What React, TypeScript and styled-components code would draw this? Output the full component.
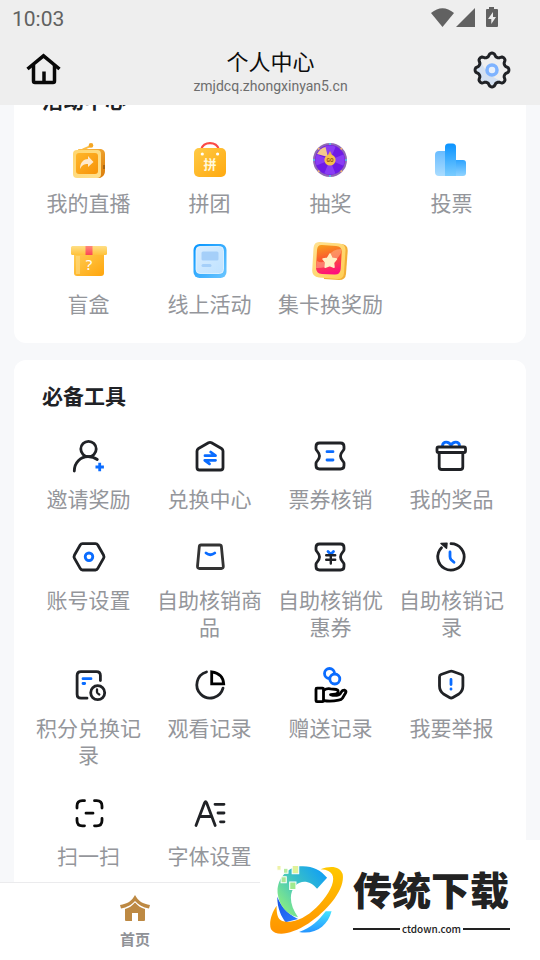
import React, { useLayoutEffect, useRef } from "react";
import styled, { createGlobalStyle } from "styled-components";

const GlobalStyle = createGlobalStyle`
  * { box-sizing: border-box; }
  body { margin: 0; background: #f7f8fa; font-family: "Noto Sans CJK SC", "Noto Sans", sans-serif; }
`;

const INK = "#202226";
const BLUE = "#0a6cff";

const Screen = styled.div`
  display: flex;
  flex-direction: column;
  height: 100vh;
  overflow: hidden;
  background: #f7f8fa;
`;

const Header = styled.header`
  flex: none;
  background: #eeeeee;
`;

const StatusBar = styled.div`
  display: flex;
  align-items: center;
  justify-content: space-between;
  height: 36px;
  padding: 0 42px 0 12px;
  color: #616161;
`;

const Clock = styled.time`
  font: 400 21px/24px Roboto, sans-serif;
  padding-top: 2px;
`;

const StatusIcons = styled.div`
  display: flex;
  align-items: center;
`;

const TitleBar = styled.div`
  display: flex;
  align-items: center;
  justify-content: space-between;
  height: 69px;
  padding: 0 28px 1px 24px;
`;

const IconButton = styled.button`
  display: block;
  padding: 0;
  border: 0;
  background: none;
  cursor: pointer;
  svg { display: block; }
`;

const Heading = styled.div`
  padding-left: 5px;
  text-align: center;
`;

const PageTitle = styled.h1`
  margin: 0 0 2px;
  font-size: 22px;
  font-weight: 400;
  line-height: 30px;
  color: #0c0c0c;
`;

const Address = styled.p`
  margin: 0;
  font: 400 14px/18px Roboto, sans-serif;
  color: #6d6d6d;
`;

const Content = styled.main`
  flex: 1;
  min-height: 0;
  overflow-y: auto;
  scrollbar-width: none;
  padding: 14px 14px 0;
`;

const Card = styled.section`
  margin-bottom: 17px;
  padding: 20px 14px 26px;
  border-radius: 12px;
  background: #ffffff;
`;

const CardTitle = styled.h2`
  margin: 0 0 26px 14px;
  font-size: 21px;
  font-weight: 700;
  line-height: 30px;
  color: #202226;
`;

const Grid = styled.div`
  display: grid;
  grid-template-columns: repeat(4, 1fr);
  row-gap: 25px;
`;

const Item = styled.a`
  display: flex;
  flex-direction: column;
  align-items: center;
  gap: 8px;
  color: #94969b;
  text-decoration: none;
  text-align: center;
  svg { display: block; flex: none; }
`;

const ItemLabel = styled.span`
  font-size: 21px;
  font-weight: 400;
  line-height: 27px;
`;

const TabBar = styled.nav`
  flex: none;
  display: grid;
  grid-template-columns: 1fr 1fr;
  height: 78px;
  border-top: 1px solid #ebebed;
  background: #ffffff;
`;

const Tab = styled.a`
  display: flex;
  flex-direction: column;
  align-items: center;
  gap: 7px;
  padding-top: 12px;
  font-size: 15px;
  font-weight: 700;
  line-height: 20px;
  color: #909297;
  text-decoration: none;
`;

const Watermark = styled.aside`
  position: fixed;
  right: 0;
  bottom: 0;
  display: flex;
  align-items: center;
  gap: 10px;
  width: 280px;
  height: 120px;
  padding-left: 10px;
  background: #ffffff;
`;

const Brand = styled.div`
  width: 157px;
`;

const BrandName = styled.div`
  margin-bottom: 11px;
  font-size: 39px;
  font-weight: 900;
  line-height: 46px;
  color: #222222;
`;

const BrandSite = styled.div`
  display: flex;
  align-items: center;
  gap: 2px;
  font: 500 10px/14px "Noto Sans CJK SC", sans-serif;
  color: #222222;
  &::before, &::after {
    content: "";
    flex: 1;
    height: 2px;
    background: #222222;
  }
`;

const Glyph = ({ children }: { children: React.ReactNode }) => (
  <svg width="41" height="41" viewBox="0 0 41 41" fill="none" stroke={INK} strokeWidth="2.8" strokeLinecap="round" strokeLinejoin="round" aria-hidden="true">
    {children}
  </svg>
);

const Art = ({ children }: { children: React.ReactNode }) => (
  <svg width="41" height="41" viewBox="0 0 41 41" fill="none" aria-hidden="true">
    {children}
  </svg>
);

const Grad = ({ id, from, to, flat }: { id: string; from: string; to: string; flat?: boolean }) => (
  <linearGradient id={id} x1="0" y1="0" x2={flat ? "0" : "1"} y2="1">
    <stop stopColor={from} />
    <stop offset="1" stopColor={to} />
  </linearGradient>
);

const LiveIcon = () => (
  <Art>
    <defs>
      <Grad id="tvSide" from="#ffc14a" to="#d97a08" />
      <Grad id="tvFront" from="#ffd66e" to="#ffe08e" />
      <Grad id="tvScreen" from="#ffb629" to="#f79308" />
    </defs>
    <path d="M15 9.3 22 6.4" stroke="#fbbd45" strokeWidth="2" strokeLinecap="round" />
    <circle cx="23" cy="5.4" r="2.3" fill="#f5a623" />
    <path d="M10 9h23q4 1 4 5v17q0 5-5 7H20z" fill="url(#tvSide)" />
    <rect x="5" y="10" width="28" height="28" rx="4" fill="url(#tvFront)" />
    <rect x="8" y="13" width="22" height="21" rx="3" fill="url(#tvScreen)" />
    <path d="M12 29c0-7 4-10 8-10v-3l5.500 6-5.500 5v-3c-4 0-6 1-8 5z" fill="#ffe9cc" />
    <path d="M36 25v4" stroke="#9a5a0c" strokeWidth="1.5" />
  </Art>
);

const GroupIcon = () => (
  <Art>
    <defs><Grad id="bag" from="#ffca45" to="#ffa90f" /></defs>
    <path d="M12 10C14 .8 28 .8 30 10" stroke="#fb4a45" strokeWidth="2.400" />
    <rect x="5" y="8" width="32" height="29" rx="5" fill="url(#bag)" />
    <circle cx="13.3" cy="14" r="1.6" fill="#fff" />
    <circle cx="28.6" cy="14" r="1.6" fill="#fff" />
    <text x="21" y="29" textAnchor="middle" fontSize="13" fontWeight="700" fill="#fff8dc" fontFamily="Noto Sans CJK SC, sans-serif">拼</text>
  </Art>
);

const wheelSector = (i: number) => {
  const a = ((i * 45 - 112) * Math.PI) / 180;
  const b = a + Math.PI / 4;
  return `M20 20L${20 + 14.5 * Math.cos(a)} ${20 + 14.5 * Math.sin(a)}A14.5 14.5 0 0 1 ${20 + 14.5 * Math.cos(b)} ${20 + 14.5 * Math.sin(b)}Z`;
};

const WheelIcon = () => (
  <Art>
    <circle cx="20" cy="20" r="16" fill="#6f1be6" stroke="#8f67b5" strokeWidth="2" />
    {[0, 2, 4, 6].map((i) => <path key={i} d={wheelSector(i)} fill="#8a3cf4" />)}
    <path d="M18 17 15.500 7Q10 8 7 14Z" fill="#f3c98d" />
    {[0, 1, 2, 3, 4, 5, 6, 7].map((i) => (
      <circle key={i} cx={20 + 16 * Math.cos((i * Math.PI) / 4)} cy={20 + 16 * Math.sin((i * Math.PI) / 4)} r="1" fill={i % 2 ? "#f2b76a" : "#4ec8ef"} />
    ))}
    <path d="m20 11 2.500 5h-5z" fill="#e9b04c" />
    <circle cx="20" cy="20" r="5.600" fill="#f6c04b" />
    <text x="20" y="22" textAnchor="middle" fontSize="5" fontWeight="700" fill="#8b4a12" fontFamily="Roboto, sans-serif">GO</text>
  </Art>
);

const VoteIcon = () => (
  <Art>
    <defs>
      <Grad id="v1" from="#69bcff" to="#a9dcff" flat />
      <Grad id="v2" from="#0a93ff" to="#7accff" flat />
      <Grad id="v3" from="#2ea4ff" to="#8fd3ff" flat />
    </defs>
    <path d="M8 11h7v25H8q-4 0-4-4V15q0-4 4-4z" fill="url(#v1)" />
    <path d="M25 20h7q3 0 3 3v10q0 3-3 3h-7z" fill="url(#v3)" />
    <path d="M14 36V7q0-3.500 3.500-3.500h4Q25 3.500 25 7v29z" fill="url(#v2)" />
  </Art>
);

const BoxIcon = () => (
  <Art>
    <defs>
      <Grad id="boxBody" from="#ffce55" to="#ffa50c" />
      <Grad id="boxLid" from="#ffdf86" to="#ffc23a" flat />
      <Grad id="ribbon" from="#ff8a7a" to="#fb4655" flat />
    </defs>
    <path d="M6 12h30v20q0 3-3 3H9q-3 0-3-3z" fill="url(#boxBody)" />
    <rect x="8" y="15" width="4" height="18" fill="#ffdc85" opacity=".6" />
    <rect x="3" y="5" width="36" height="9" rx="1.500" fill="url(#boxLid)" />
    <path d="M17.500 5h7v9h-7z" fill="url(#ribbon)" />
    <text x="21" y="29" textAnchor="middle" fontSize="15" fill="#fff" fontFamily="Noto Sans, sans-serif">?</text>
  </Art>
);

const OnlineIcon = () => (
  <Art>
    <defs>
      <Grad id="onFrame" from="#0595ff" to="#6cc6ff" />
      <Grad id="onFace" from="#d9edff" to="#bfe2ff" />
    </defs>
    <rect x="4.500" y="3" width="33" height="34" rx="6" fill="url(#onFrame)" />
    <rect x="7" y="5.500" width="27.500" height="27" rx="4" fill="url(#onFace)" stroke="#eef8ff" strokeWidth=".8" />
    <rect x="12.500" y="10.500" width="17" height="9" rx="1.500" fill="#a5cff9" />
    <rect x="12.500" y="23" width="10" height="3" rx="1.500" fill="#a5cff9" />
  </Art>
);

const CollectIcon = () => (
  <Art>
    <defs>
      <Grad id="colFrame" from="#ffe293" to="#ffce55" />
      <linearGradient id="colFace" x1=".3" y1="0" x2=".5" y2="1">
        <stop stopColor="#f89a1c" />
        <stop offset=".45" stopColor="#fa5a2e" />
        <stop offset="1" stopColor="#ff0c80" />
      </linearGradient>
    </defs>
    <path d="m11 2 20 1q7 .5 6.700 7L36 33q-.5 6-7 6L14 38z" fill="#f3ae35" />
    <path d="m10 1 19 1.500q7 .5 6.500 7L34 32q-.5 6.500-7 6L9 36.500q-7-.5-6.800-7L3.500 7Q4 .5 10 1z" fill="url(#colFrame)" />
    <path d="m12 4 14 1q6 .5 5.700 6l-1 17q-.5 6-6.500 5.500L12 33q-6-.5-6-6L7 9q.5-5.500 5-5z" fill="url(#colFace)" />
    <path d="M7 20q7 4 11-4T31 8v4Q22 28 6 27z" fill="#ffb08c" opacity=".55" />
    <path d="m20 13 2 4.300 4.500.7-3 3.700.5 4.500-4.300-1.600-4.500 1.600.5-4.800-2.700-3.400 4.500-.8z" fill="#fff0c5" stroke="#fff0c5" strokeWidth="1.500" strokeLinejoin="round" />
  </Art>
);

const TICKET = "M9.500 7H30.500Q34 7 34 10.500V13C34 14.500 30.500 16 30.500 20C30.500 24 34 25.500 34 27V29.500Q34 33 30.500 33H9.500Q6 33 6 29.500V27C6 25.500 9.500 24 9.500 20C9.500 16 6 14.500 6 13V10.500Q6 7 9.500 7Z";

const InviteIcon = () => (
  <Glyph>
    <circle cx="20.500" cy="13" r="7.700" />
    <path d="M6.300 35C6.300 26.500 12.500 20.700 20 20.700c3.800 0 6.500.8 9.300 2.800" />
    <path d="M31.700 26.800v8.400M27.500 31h8.400" stroke={BLUE} strokeLinecap="butt" />
  </Glyph>
);

const ExchangeIcon = () => (
  <Glyph>
    <path d="M19.500 6.700 9.500 12.500Q8 13.500 8 15v16.500Q8 34 10.500 34h21q2.500 0 2.500-2.500V15q0-1.500-1.500-2.500l-10-5.800q-1.500-.8-3 0z" />
    <path d="M16 19.700h10.500L21.700 16M26.500 24.300H15.800l4.700 3.500" stroke={BLUE} />
  </Glyph>
);

const TicketIcon = () => (
  <Glyph><path d={TICKET} /><path d="M17 15.700h6M17 24h6" stroke={BLUE} /></Glyph>
);

const PrizeIcon = () => (
  <Glyph>
    <path d="M11.500 9.500C12 5 18 5 20 9.500 22 5 28 5 28.500 9.500" stroke={BLUE} />
    <rect x="6" y="11" width="28.500" height="5.500" rx="1.500" />
    <path d="M8.200 17v14q0 2.500 2.500 2.500h18.600q2.500 0 2.500-2.500V17" />
  </Glyph>
);

const AccountIcon = () => (
  <Glyph>
    <path d="M14.500 6.700h13q1.500 0 2.300 1.300l5.700 10q.9 1.700 0 3.400l-5.700 10q-.8 1.600-2.300 1.600h-13q-1.500 0-2.300-1.600l-5.700-10q-.9-1.700 0-3.400l5.700-10q.8-1.300 2.300-1.300z" />
    <circle cx="21" cy="19.800" r="3.800" stroke={BLUE} />
  </Glyph>
);

const BagIcon = () => (
  <Glyph>
    <path d="M12 8h18.600q1.600 0 1.800 1.600l1.900 19.600q.2 2.300-2 2.300H10.500q-2.200 0-2-2.300l1.800-19.600Q10.500 8 12 8z" stroke="#333" />
    <path d="M17 16q4.200 3.500 8.800 0" stroke={BLUE} />
  </Glyph>
);

const CouponIcon = () => (
  <Glyph>
    <path d={TICKET} />
    <path d="m18 14.500 2.800 2.700 2.700-2.700" stroke={BLUE} />
    <path d="M16.200 18.300h9M16.200 22.800h9M20.800 18v8.500" strokeWidth="2.400" />
  </Glyph>
);

const HistoryIcon = () => (
  <Glyph>
    <path d="M20 6.700a13.200 13.200 0 1 1-9.500 4" />
    <path d="m10 6.500 6-.2-.5 5z" fill={INK} strokeWidth="1.500" />
    <path d="M19 15v4.500q0 2 1.200 3.200l2.800 2.500" stroke={BLUE} />
  </Glyph>
);

const PointsIcon = () => (
  <Glyph>
    <path d="M19 33.200h-6q-3.900 0-3.900-3.900V10.600q0-3.900 3.900-3.900h15.500q3.900 0 3.900 3.900v5" />
    <path d="M15 13.700h8M15 18.500h1.700" stroke={BLUE} />
    <circle cx="29.700" cy="27.700" r="7" />
    <path d="M29 24.500v2.800q0 .8 2.300 2.200" strokeWidth="2.300" />
  </Glyph>
);

const WatchIcon = () => (
  <Glyph>
    <path d="M34 23.200A13.300 13.300 0 1 1 17.500 7" />
    <path d="M22.700 6.800v12h12Q34 8.500 22.700 6.800z" stroke="#000" strokeLinejoin="miter" />
  </Glyph>
);

const GiveIcon = () => (
  <Glyph>
    <circle cx="19.500" cy="8.500" r="5" stroke={BLUE} />
    <circle cx="24.800" cy="14" r="5" stroke={BLUE} fill="#fff" />
    <g stroke="#000">
      <rect x="6" y="23.200" width="7.500" height="13.500" rx="1" />
      <path d="M14 25q3-2 6.500-1.200l6 .7q2 .5 1.500 2.500-.5 2-3 2.200l-4.500.4q4 1.500 8 .4 2-.8 3-3.200 1-1.800 3.200-1.600 1.800.8 1 2.600l-3 5q-1.500 2-4 2.400-8 1.700-14.700.5" />
    </g>
  </Glyph>
);

const ReportIcon = () => (
  <Glyph>
    <path d="M18.500 6.500 10 9.500Q8.500 10 8.500 12v9q0 5 4 8l6 3.500q1.700 1 3.400 0l6-3.500q4-3 4-8v-9q0-2-1.500-2.500L22 6.500q-1.700-.6-3.500 0z" />
    <path d="M20 14.500v5M20 24v.2" stroke={BLUE} />
  </Glyph>
);

const ScanIcon = () => (
  <Glyph>
    <path d="M9 15v-2q0-5.300 5.300-5.300h2.200M26.500 7.700h2.200q5.300 0 5.300 5.300v2M34 25.500v2q0 5.300-5.300 5.300h-2.200M16.500 32.800h-2.200Q9 32.800 9 27.500v-2M18 20.200h7" stroke="#0b0b0b" />
  </Glyph>
);

const FontIcon = () => (
  <Glyph>
    <path d="m7 32.500 8.600-22.700q1-2.300 2 0l8.600 22.700M10.500 23.500h12" />
    <path d="M26 11.300h9M29 20h6M31.500 28.800H35" />
  </Glyph>
);

const HomeIcon = () => (
  <svg width="40" height="40" viewBox="0 0 40 40" fill="none" stroke="#080808" strokeWidth="3.500" aria-hidden="true">
    <path d="M3.500 19 19.500 5.800 35.500 19" />
    <path d="M9.500 15v16q0 1.500 1.500 1.500h18q1.500 0 1.500-1.500V15M20 21.500V32" />
  </svg>
);

const gearOutline = Array.from({ length: 96 }, (_, i) => {
  const a = (i * Math.PI) / 48;
  const wave = Math.cos(8 * a);
  const r = 15.2 + 1.7 * Math.sign(wave) * Math.sqrt(Math.abs(wave));
  return `${(20 + r * Math.cos(a)).toFixed(2)},${(20 + r * Math.sin(a)).toFixed(2)}`;
}).join(" ");

const GearIcon = () => (
  <svg width="40" height="40" viewBox="0 0 40 40" fill="none" aria-hidden="true">
    <path d="M8 9Q13 25 31 32 20 39 9 30 2 20 8 9z" fill="#d3e0f1" />
    <polygon points={gearOutline} stroke={INK} strokeWidth="3" strokeLinejoin="round" />
    <circle cx="20" cy="20" r="5" fill="#e8f0fb" stroke="#7eb3ff" strokeWidth="3.500" />
  </svg>
);

const tools = [
  { label: "邀请奖励", icon: <InviteIcon /> },
  { label: "兑换中心", icon: <ExchangeIcon /> },
  { label: "票券核销", icon: <TicketIcon /> },
  { label: "我的奖品", icon: <PrizeIcon /> },
  { label: "账号设置", icon: <AccountIcon /> },
  { label: "自助核销商品", icon: <BagIcon /> },
  { label: "自助核销优惠券", icon: <CouponIcon /> },
  { label: "自助核销记录", icon: <HistoryIcon /> },
  { label: "积分兑换记录", icon: <PointsIcon /> },
  { label: "观看记录", icon: <WatchIcon /> },
  { label: "赠送记录", icon: <GiveIcon /> },
  { label: "我要举报", icon: <ReportIcon /> },
  { label: "扫一扫", icon: <ScanIcon /> },
  { label: "字体设置", icon: <FontIcon /> },
];

const activities = [
  { label: "我的直播", icon: <LiveIcon /> },
  { label: "拼团", icon: <GroupIcon /> },
  { label: "抽奖", icon: <WheelIcon /> },
  { label: "投票", icon: <VoteIcon /> },
  { label: "盲盒", icon: <BoxIcon /> },
  { label: "线上活动", icon: <OnlineIcon /> },
  { label: "集卡换奖励", icon: <CollectIcon /> },
];

type Entry = { label: string; icon: React.ReactNode };

const MenuCard = ({ title, items }: { title: string; items: Entry[] }) => (
  <Card>
    <CardTitle>{title}</CardTitle>
    <Grid>
      {items.map((item) => (
        <Item key={item.label} href="#">
          {item.icon}
          <ItemLabel>{item.label}</ItemLabel>
        </Item>
      ))}
    </Grid>
  </Card>
);

const BrandLogo = () => (
  <svg width="73" height="68" viewBox="785 243 211 203" preserveAspectRatio="none" aria-hidden="true">
    <defs>
      <linearGradient id="arcTop" x1="0" y1=".8" x2="1" y2="0">
        <stop stopColor="#8ff07d" />
        <stop offset=".5" stopColor="#38bfc8" />
        <stop offset="1" stopColor="#0898ff" />
      </linearGradient>
      <Grad id="orbit" from="#ffc800" to="#ff9300" flat />
      <Grad id="arcDeep" from="#1554e6" to="#2f7cff" />
      <Grad id="arcLow" from="#44e3ff" to="#2494ff" flat />
    </defs>
    <path d="M806 335c0 35 12 60 24 76l36-10c-34-17-50-40-60-66z" fill="url(#arcDeep)" />
    <path d="M870 244c35-3 60 9 80 34l-29 33c-18-24-45-28-62-10-22 24-16 62 7 95-35-8-55-38-59-72-3-38 24-76 63-80z" fill="url(#arcTop)" />
    <path d="M869 440c35-12 57-35 77-62h17c-11 43-47 71-94 62z" fill="url(#arcLow)" />
    <path d="M931 253c31-13 57-8 64 14 8 45-42 108-99 148-50 33-93 40-108 17-7-17 1-48 16-70 0 29 4 44 23 47 29 5 63-13 92-42 38-39 66-91 36-108-6-4-14-6-24-6z" fill="url(#orbit)" />
    <g stroke="#fff" strokeWidth="3">
      <path d="M849 241h19v25h-19z" fill="#dff29a" />
      <path d="M824 250h13v15h-13z" fill="#b5eba0" />
      <path d="M805 241h12v15h-12z" fill="#eef2a8" />
      <path d="M817 275h15v18h-15z" fill="#a9e797" />
      <path d="M842 291h18v22h-18z" fill="#a1ea8e" />
    </g>
  </svg>
);

export default function App() {
  const content = useRef<HTMLElement>(null);

  useLayoutEffect(() => {
    if (content.current) content.current.scrollTop = 55;
  }, []);

  return (
    <Screen>
      <GlobalStyle />
      <Header>
        <StatusBar>
          <Clock>10:03</Clock>
          <StatusIcons>
            <svg width="67" height="22" viewBox="0 0 67 22" fill="#616161" aria-hidden="true">
              <path d="M0 6Q11.500-3.500 23 6L11.500 20z" />
              <path d="M44 1v19H25z" />
              <path fillRule="evenodd" d="M58 0h5v2h3q1 0 1 1v16q0 1-1 1H56q-1 0-1-1V3q0-1 1-1h2zM62 5l-5 7h3.300v5l4.700-7h-3z" />
            </svg>
          </StatusIcons>
        </StatusBar>
        <TitleBar>
          <IconButton type="button" aria-label="主页"><HomeIcon /></IconButton>
          <Heading>
            <PageTitle>个人中心</PageTitle>
            <Address>zmjdcq.zhongxinyan5.cn</Address>
          </Heading>
          <IconButton type="button" aria-label="设置"><GearIcon /></IconButton>
        </TitleBar>
      </Header>
      <Content ref={content}>
        <MenuCard title="活动中心" items={activities} />
        <MenuCard title="必备工具" items={tools} />
      </Content>
      <TabBar>
        <Tab href="#">
          <svg width="30" height="27" viewBox="0 0 30 27" fill="#bd8943" aria-hidden="true">
            <path d="M15 0c3 6 8 9 15 10l-1 3.500C23 12.500 18 9.500 15 6 12 9.500 7 12.500 1 13.500L0 10C7 9 12 6 15 0z" />
            <path d="M15 7.500c3 3.500 6 5.500 10 6.500V25q0 1-1 1h-6v-8h-6v8H6q-1 0-1-1V14c4-1 7-3 10-6.500z" />
          </svg>
          首页
        </Tab>
      </TabBar>
      <Watermark>
        <BrandLogo />
        <Brand>
          <BrandName>传统下载</BrandName>
          <BrandSite>ctdown.com</BrandSite>
        </Brand>
      </Watermark>
    </Screen>
  );
}
